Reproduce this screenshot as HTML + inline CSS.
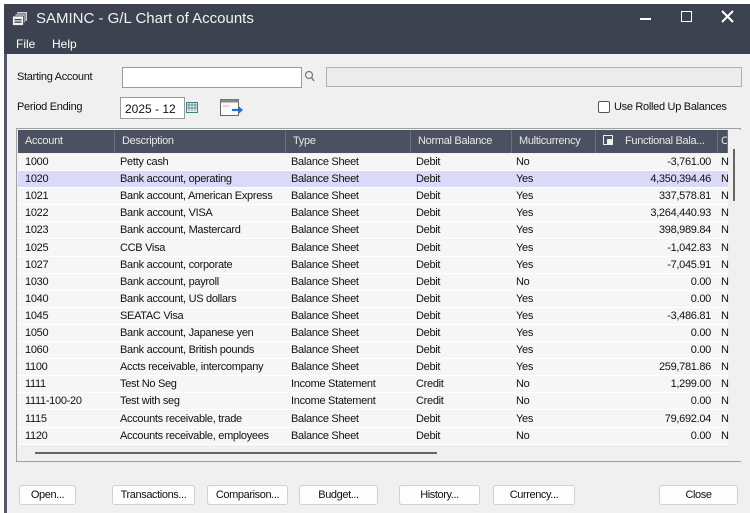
<!DOCTYPE html>
<html><head><meta charset="utf-8"><style>
*{margin:0;padding:0;box-sizing:border-box}
body{width:750px;height:513px;overflow:hidden;background:#fff;font-family:"Liberation Sans",sans-serif;font-size:11px;color:#111;position:relative}
.abs{position:absolute}
#top{left:0;top:0;width:750px;height:4px;background:#fff}
#title{left:4px;top:4px;width:746px;height:30px;background:#3d4250;color:#fff}
#menu{left:4px;top:34px;width:746px;height:20px;background:#3d4250;color:#fff;font-size:12px}
#body{left:4px;top:54px;width:746px;height:459px;background:#f0f0f0;border-left:3px solid #555a66}
.lbl{font-size:11px;letter-spacing:-0.3px}
.inp{background:#fff;border:1px solid #9a9a9a}
#grid{left:16px;top:128px;width:725px;height:334px;border:1px solid #a0a0a0;background:#f0f0f0}
.hd{position:absolute;top:1px;height:23px;background:#4b5160;color:#e8e8e8;line-height:23px;padding-left:7px;border-right:1px solid #6c7180;font-size:11px;letter-spacing:-0.3px;white-space:nowrap;overflow:hidden}
.row{position:absolute;left:1px;width:710px;height:17px;background:#f6f6f6;border-bottom:1px solid #fff;line-height:16px;white-space:nowrap;letter-spacing:-0.3px}
.row span{position:absolute;top:0}
.sel{background:#d9d9f8}
.btn{position:absolute;top:485px;height:20px;background:#fdfdfd;border:1px solid #d0d0d0;border-radius:3px;text-align:center;line-height:18px;font-size:11px;letter-spacing:-0.4px}
</style></head><body>
<div class="abs" id="top"></div>
<div class="abs" id="title">
 <svg class="abs" style="left:8px;top:8px" width="16" height="14" viewBox="0 0 16 14"><rect x="5" y="0" width="10" height="9" fill="#c9ccd3"/><rect x="3" y="2" width="10" height="9" fill="#dadde3" stroke="#3d4250" stroke-width="0.8"/><rect x="0.5" y="4" width="11" height="9.5" fill="#f2f2f2" stroke="#3d4250" stroke-width="0.8"/><rect x="2.5" y="7" width="7" height="1.3" fill="#3d4250"/><rect x="2.5" y="9.5" width="7" height="1.3" fill="#3d4250"/></svg>
 <div class="abs" style="left:32px;top:6px;font-size:15px;color:#f2f2f2">SAMINC - G/L Chart of Accounts</div>
 <div class="abs" style="left:636px;top:14px;width:11px;height:2px;background:#fff"></div>
 <div class="abs" style="left:677px;top:7px;width:11px;height:11px;border:1.5px solid #fff"></div>
 <svg class="abs" style="left:717px;top:6px" width="13" height="13" viewBox="0 0 13 13"><path d="M1 1L12 12M12 1L1 12" stroke="#fff" stroke-width="2"/></svg>
</div>
<div class="abs" id="menu"><span class="abs" style="left:12px;top:3px">File</span><span class="abs" style="left:48px;top:3px">Help</span></div>
<div class="abs" id="body"></div>
<div class="abs lbl" style="left:17px;top:71px">Starting Account</div>
<div class="abs inp" style="left:122px;top:67px;width:180px;height:21px"></div>
<svg class="abs" style="left:304px;top:70px" width="12" height="14" viewBox="0 0 12 14"><circle cx="5" cy="5" r="3.5" fill="none" stroke="#777" stroke-width="1.2"/><path d="M7.5 7.5L10 11" stroke="#777" stroke-width="1.5"/></svg>
<div class="abs" style="left:326px;top:67px;width:416px;height:20px;border:1px solid #b0b0b0;background:#ececec"></div>
<div class="abs lbl" style="left:17px;top:101px">Period Ending</div>
<div class="abs inp" style="left:120px;top:97px;width:65px;height:22px;padding:4px 0 0 4px;font-size:12px">2025 - 12</div>
<svg class="abs" style="left:186px;top:101px" width="12" height="12" viewBox="0 0 12 12"><rect x="0.5" y="1.5" width="11" height="10" fill="none" stroke="#4a7a8a"/><path d="M0.5 4h11M3 1v9M6 1v9M9 1v9M0.5 7h11" stroke="#4a7a8a" stroke-width="0.8"/></svg>
<svg class="abs" style="left:219px;top:98px" width="26" height="20" viewBox="0 0 26 20"><rect x="1.5" y="1.5" width="18" height="16" fill="#fafafa" stroke="#666"/><rect x="1.5" y="1.5" width="18" height="3" fill="#888"/><path d="M4 8h6" stroke="#bbb"/><path d="M13 12h9" stroke="#1a73d9" stroke-width="2.2"/><path d="M20 8.5l4 3.5-4 3.5z" fill="#1a73d9"/></svg>
<div class="abs" style="left:598px;top:101px;width:12px;height:12px;border:1px solid #555;border-radius:2px;background:#fff"></div>
<div class="abs lbl" style="left:614px;top:101px">Use Rolled Up Balances</div>

<div class="abs" id="grid">
 <div class="hd" style="left:1px;width:97px">Account</div>
 <div class="hd" style="left:98px;width:171px">Description</div>
 <div class="hd" style="left:269px;width:125px">Type</div>
 <div class="hd" style="left:394px;width:101px">Normal Balance</div>
 <div class="hd" style="left:495px;width:84px">Multicurrency</div>
 <div class="hd" style="left:579px;width:122px"><span style="display:inline-block;width:10px;height:10px;border:1.5px solid #eee;vertical-align:-1px;margin-right:12px;position:relative"><span style="position:absolute;right:0;bottom:0;width:5px;height:5px;background:#eee"></span></span>Functional Bala...</div>
 <div class="hd" style="left:701px;width:10px;padding-left:3px">C</div>
 <div class="abs" style="left:711px;top:1px;width:13px;height:331px;background:#f0f0f0"></div>
 <div class="abs" style="left:716px;top:20px;width:2px;height:52px;background:#666"></div>
 <div class="abs" style="left:18px;top:323px;width:402px;height:2px;background:#666"></div>
 <div id="rows"></div>
</div>

<div class="btn" style="left:19px;width:57px">Open...</div>
<div class="btn" style="left:112px;width:83px">Transactions...</div>
<div class="btn" style="left:207px;width:81px">Comparison...</div>
<div class="btn" style="left:299px;width:79px">Budget...</div>
<div class="btn" style="left:399px;width:81px">History...</div>
<div class="btn" style="left:493px;width:82px">Currency...</div>
<div class="btn" style="left:659px;width:79px">Close</div>

<script>
var d=[["1000","Petty cash","Balance Sheet","Debit","No","-3,761.00"],
["1020","Bank account, operating","Balance Sheet","Debit","Yes","4,350,394.46"],
["1021","Bank account, American Express","Balance Sheet","Debit","Yes","337,578.81"],
["1022","Bank account, VISA","Balance Sheet","Debit","Yes","3,264,440.93"],
["1023","Bank account, Mastercard","Balance Sheet","Debit","Yes","398,989.84"],
["1025","CCB Visa","Balance Sheet","Debit","Yes","-1,042.83"],
["1027","Bank account, corporate","Balance Sheet","Debit","Yes","-7,045.91"],
["1030","Bank account, payroll","Balance Sheet","Debit","No","0.00"],
["1040","Bank account, US dollars","Balance Sheet","Debit","Yes","0.00"],
["1045","SEATAC Visa","Balance Sheet","Debit","Yes","-3,486.81"],
["1050","Bank account, Japanese yen","Balance Sheet","Debit","Yes","0.00"],
["1060","Bank account, British pounds","Balance Sheet","Debit","Yes","0.00"],
["1100","Accts receivable, intercompany","Balance Sheet","Debit","Yes","259,781.86"],
["1111","Test No Seg","Income Statement","Credit","No","1,299.00"],
["1111-100-20","Test with seg","Income Statement","Credit","No","0.00"],
["1115","Accounts receivable, trade","Balance Sheet","Debit","Yes","79,692.04"],
["1120","Accounts receivable, employees","Balance Sheet","Debit","No","0.00"]];
var h="";
d.forEach(function(r,i){
h+='<div class="row'+(i==1?' sel':'')+'" style="top:'+(25+i*17.1)+'px">'+
'<span style="left:7px">'+r[0]+'</span><span style="left:102px">'+r[1]+'</span><span style="left:273px">'+r[2]+'</span><span style="left:398px">'+r[3]+'</span><span style="left:498px">'+r[4]+'</span><span style="right:17px">'+r[5]+'</span><span style="left:703px">N</span></div>';
});
document.getElementById("rows").innerHTML=h;
</script>
</body></html>
